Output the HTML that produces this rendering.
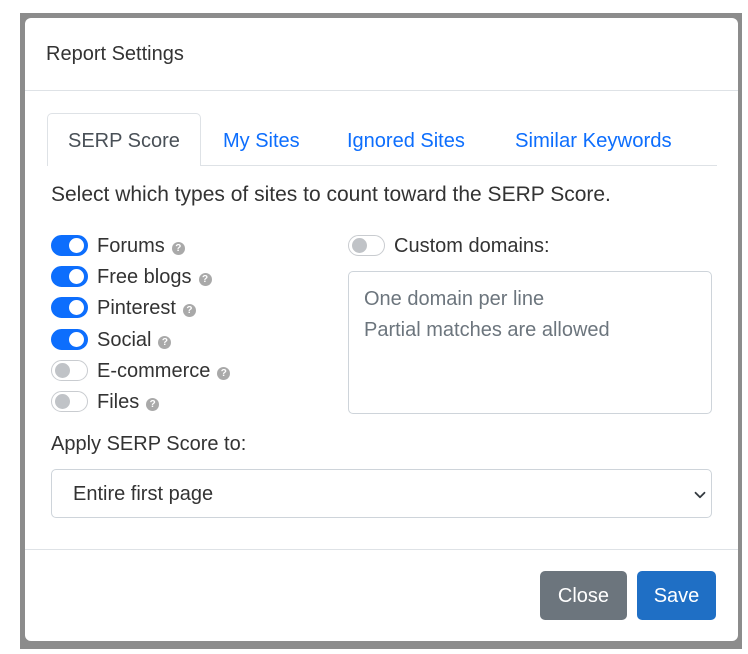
<!DOCTYPE html>
<html><head><style>
*{box-sizing:border-box;margin:0;padding:0}
body{width:748px;height:654px;background:#fff;position:relative;overflow:hidden;font-family:"Liberation Sans",sans-serif;color:#212529}
.bd{position:absolute;left:20px;top:13px;width:722px;height:636px;background:#8c8c8c}
.m{position:absolute;left:25px;top:18px;width:713px;height:623px;background:#fff;border-radius:6px}
.a{position:absolute;white-space:nowrap}
.sw{position:absolute;width:37px;height:21px;border-radius:11px}
.on{background:#0d6efd;border:1px solid #0d6efd}
.on::after{content:"";position:absolute;right:3px;top:2px;width:15px;height:15px;border-radius:50%;background:#fff}
.off{background:#fff;border:1px solid #c9ccd0}
.off::after{content:"";position:absolute;left:3px;top:2px;width:15px;height:15px;border-radius:50%;background:#c0c3c7}
.lb{position:absolute;font-size:20px;line-height:22px;white-space:nowrap;color:#333}
.q{display:inline-block;width:13px;height:13px;border-radius:50%;background:#a9a9a9;color:#fff;font-size:10px;line-height:13px;text-align:center;font-weight:bold;vertical-align:1px;margin-left:7px}
</style></head><body>
<div class="bd"></div>
<div class="m">
 <div class="a" style="left:21px;top:25px;font-size:20px;color:#333">Report Settings</div>
 <div class="a" style="left:0;top:72px;width:713px;height:1px;background:#dee2e6"></div>
 <div class="a" style="left:22px;top:95px;width:154px;height:53px;border:1px solid #dee2e6;border-bottom:none;border-radius:5px 5px 0 0;background:#fff"></div>
 <div class="a" style="left:176px;top:147px;width:516px;height:1px;background:#dee2e6"></div>
 <div class="a" style="left:43px;top:112px;font-size:20px;color:#495057">SERP Score</div>
 <div class="a" style="left:198px;top:112px;font-size:20px;color:#0d6efd">My Sites</div>
 <div class="a" style="left:322px;top:112px;font-size:20px;color:#0d6efd">Ignored Sites</div>
 <div class="a" style="left:490px;top:112px;font-size:20.3px;color:#0d6efd">Similar Keywords</div>
 <div class="a" style="left:26px;top:165px;font-size:21px;color:#333">Select which types of sites to count toward the SERP Score.</div>

 <div class="sw on" style="left:26px;top:217px"></div><div class="lb" style="left:72px;top:217px">Forums<span class="q">?</span></div>
 <div class="sw on" style="left:26px;top:248px"></div><div class="lb" style="left:72px;top:248px">Free blogs<span class="q">?</span></div>
 <div class="sw on" style="left:26px;top:279px"></div><div class="lb" style="left:72px;top:279px">Pinterest<span class="q">?</span></div>
 <div class="sw on" style="left:26px;top:311px"></div><div class="lb" style="left:72px;top:311px">Social<span class="q">?</span></div>
 <div class="sw off" style="left:26px;top:342px"></div><div class="lb" style="left:72px;top:342px">E-commerce<span class="q">?</span></div>
 <div class="sw off" style="left:26px;top:373px"></div><div class="lb" style="left:72px;top:373px">Files<span class="q">?</span></div>

 <div class="sw off" style="left:323px;top:217px"></div><div class="lb" style="left:369px;top:217px">Custom domains:</div>
 <div class="a" style="left:323px;top:253px;width:364px;height:143px;border:1px solid #ced4da;border-radius:5px;padding:12px 15px;font-size:20px;line-height:31px;color:#6c757d">One domain per line<br>Partial matches are allowed</div>

 <div class="a" style="left:26px;top:415px;font-size:20px;color:#333">Apply SERP Score to:</div>
 <div class="a" style="left:26px;top:451px;width:661px;height:49px;border:1px solid #ced4da;border-radius:5px;font-size:20px;line-height:49px;color:#333"><span style="position:absolute;left:21px;top:0">Entire first page</span>
  <svg style="position:absolute;left:642px;top:19px" width="12" height="12" viewBox="0 0 16 16"><path d="M2 5l6 6 6-6" fill="none" stroke="#343a40" stroke-width="2.4" stroke-linecap="round" stroke-linejoin="round"/></svg></div>
 <div class="a" style="left:0;top:531px;width:713px;height:1px;background:#dee2e6"></div>
 <div class="a" style="left:515px;top:553px;width:87px;height:49px;background:#6c757d;border-radius:5px;color:#fff;font-size:20px;line-height:51px;text-align:center">Close</div>
 <div class="a" style="left:612px;top:553px;width:79px;height:49px;background:#1f6fc5;border-radius:5px;color:#fff;font-size:20px;line-height:51px;text-align:center">Save</div>
</div>
</body></html>
